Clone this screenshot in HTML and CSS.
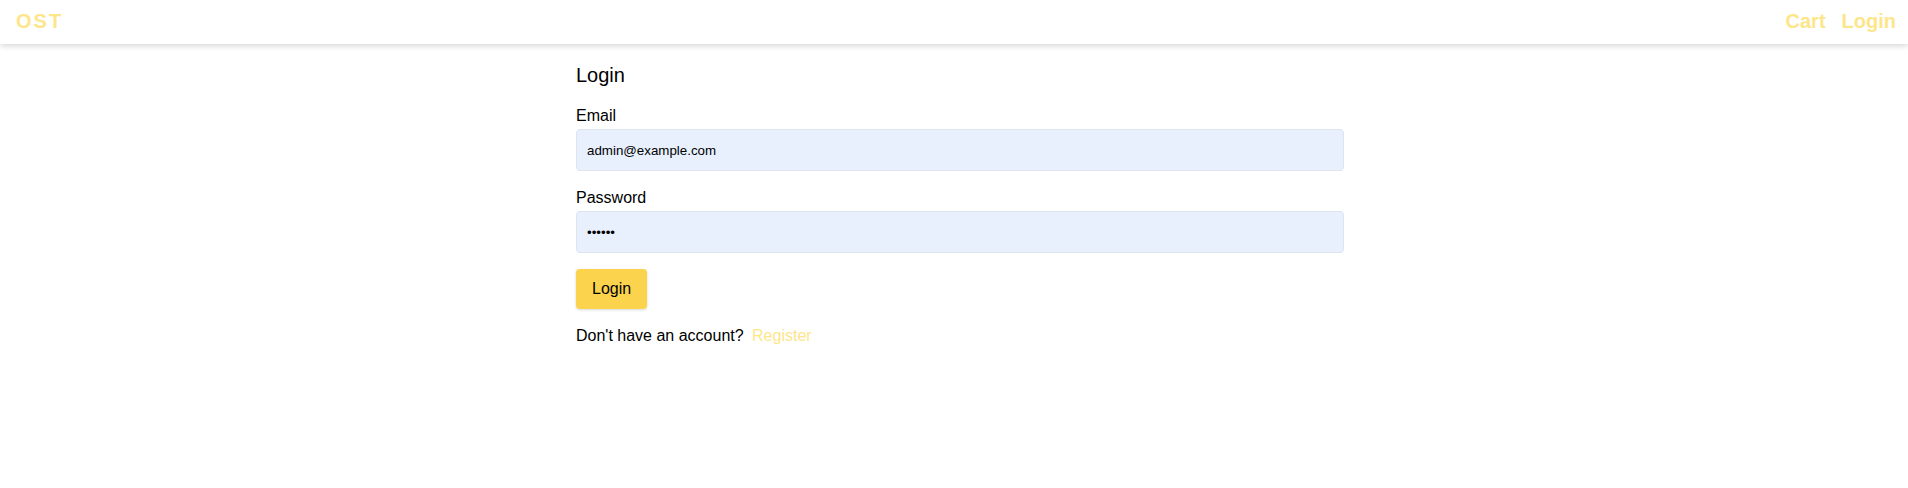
FILE: index.html
```html
<!DOCTYPE html>
<html lang="en">
<head>
<meta charset="utf-8">
<title>OST - Login</title>
<link rel="stylesheet" href="styles.css">
</head>
<body>
<header class="navbar">
  <a class="brand" href="#">OST</a>
  <nav class="nav-links">
    <a href="#">Cart</a>
    <a href="#">Login</a>
  </nav>
</header>
<main class="container">
  <h1 class="title">Login</h1>
  <form class="form">
    <div class="field">
      <label class="label" for="email">Email</label>
      <input class="input" id="email" type="email" value="admin@example.com">
    </div>
    <div class="field">
      <label class="label" for="password">Password</label>
      <input class="input" id="password" type="password" value="123456">
    </div>
    <button class="btn" type="button">Login</button>
  </form>
  <p class="footer-text">Don't have an account? <a class="link" href="#">Register</a></p>
</main>
</body>
</html>
```
FILE: styles.css
```css
* { box-sizing: border-box; }
html, body {
  margin: 0;
  padding: 0;
  background: #fff;
  font-family: "Liberation Sans", Arial, sans-serif;
  color: #000;
}
a { text-decoration: none; }

.navbar {
  height: 44px;
  display: flex;
  align-items: center;
  justify-content: space-between;
  padding: 0 12px 2px 16px;
  background: #fff;
  box-shadow: 0 2px 6px rgba(0, 0, 0, 0.16);
  position: relative;
}
.brand {
  color: #fde68a;
  font-weight: 700;
  font-size: 20px;
  line-height: 28px;
  letter-spacing: 2px;
}
.nav-links {
  display: flex;
  gap: 16px;
}
.nav-links a {
  color: #fde68a;
  font-weight: 700;
  font-size: 20px;
  line-height: 28px;
}

.container {
  width: 768px;
  margin-left: calc(50% - 378px);
  padding-top: 16px;
}
.title {
  margin: 0 0 14px;
  font-size: 20px;
  line-height: 30px;
  font-weight: 400;
}
.form { margin: 0; }
.field { margin-bottom: 15px; }
.label {
  display: block;
  font-size: 16px;
  line-height: 24px;
  margin-bottom: 1px;
}
.input {
  display: block;
  width: 100%;
  height: 42px;
  padding: 0 10px;
  border: 1px solid #dfe5ef;
  border-radius: 4px;
  background: #e8f0fe;
  font-family: "Liberation Sans", Arial, sans-serif;
  font-size: 13.33px;
  color: #000;
  outline: none;
}
.btn {
  display: block;
  height: 40px;
  padding: 0 16px;
  margin-top: 16px;
  border: none;
  border-radius: 4px;
  background: #fcd34d;
  color: #000;
  font-family: "Liberation Sans", Arial, sans-serif;
  font-size: 16px;
  box-shadow: 0 1px 3px rgba(0, 0, 0, 0.15);
}
.footer-text {
  margin: 15px 0 0;
  font-size: 16px;
  line-height: 24px;
}
.link {
  color: #fde68a;
  margin-left: 4px;
}
```
